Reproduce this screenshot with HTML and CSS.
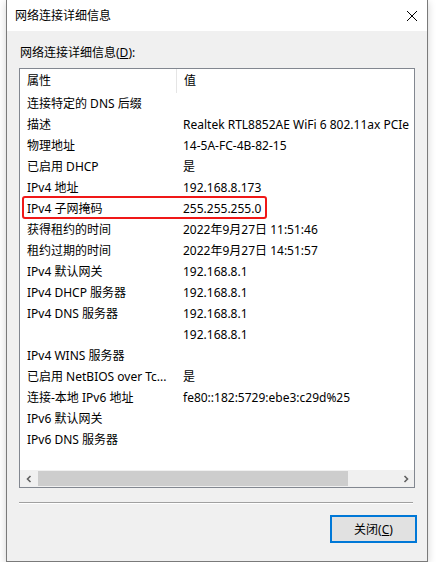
FILE: index.html
```html
<!DOCTYPE html>
<html lang="zh-CN">
<head>
    <meta charset="UTF-8">
    <title>网络连接详细信息</title>
    <link rel="stylesheet" href="styles.css">
</head>
<body>
    <div class="window">
        <div class="titlebar">
            <span class="title">网络连接详细信息</span>
            <svg class="close" width="12" height="12" viewBox="0 0 12 12">
                <path d="M1 1 L11 11 M11 1 L1 11" stroke="#000" stroke-width="1" fill="none"/>
            </svg>
        </div>
        <div class="content">
            <div class="label">网络连接详细信息(<u>D</u>):</div>
            <div class="listbox">
                <div class="header">
                    <div class="col1">属性</div>
                    <div class="col2">值</div>
                </div>
                <div class="rows">
                    <div class="row"><div class="col1">连接特定的 DNS 后缀</div><div class="col2"></div></div>
                    <div class="row"><div class="col1">描述</div><div class="col2">Realtek RTL8852AE WiFi 6 802.11ax PCIe</div></div>
                    <div class="row"><div class="col1">物理地址</div><div class="col2">14-5A-FC-4B-82-15</div></div>
                    <div class="row"><div class="col1">已启用 DHCP</div><div class="col2">是</div></div>
                    <div class="row"><div class="col1">IPv4 地址</div><div class="col2">192.168.8.173</div></div>
                    <div class="row"><div class="col1">IPv4 子网掩码</div><div class="col2">255.255.255.0</div></div>
                    <div class="row"><div class="col1">获得租约的时间</div><div class="col2">2022年9月27日 11:51:46</div></div>
                    <div class="row"><div class="col1">租约过期的时间</div><div class="col2">2022年9月27日 14:51:57</div></div>
                    <div class="row"><div class="col1">IPv4 默认网关</div><div class="col2">192.168.8.1</div></div>
                    <div class="row"><div class="col1">IPv4 DHCP 服务器</div><div class="col2">192.168.8.1</div></div>
                    <div class="row"><div class="col1">IPv4 DNS 服务器</div><div class="col2">192.168.8.1</div></div>
                    <div class="row"><div class="col1"></div><div class="col2">192.168.8.1</div></div>
                    <div class="row"><div class="col1">IPv4 WINS 服务器</div><div class="col2"></div></div>
                    <div class="row"><div class="col1">已启用 NetBIOS over Tc...</div><div class="col2">是</div></div>
                    <div class="row"><div class="col1">连接-本地 IPv6 地址</div><div class="col2">fe80::182:5729:ebe3:c29d%25</div></div>
                    <div class="row"><div class="col1">IPv6 默认网关</div><div class="col2"></div></div>
                    <div class="row"><div class="col1">IPv6 DNS 服务器</div><div class="col2"></div></div>
                </div>
                <div class="scrollbar">
                    <div class="sb-btn">
                        <svg width="8" height="8" viewBox="0 0 8 8"><path d="M5.5 1 L2.5 4 L5.5 7" stroke="#606060" stroke-width="1.6" fill="none"/></svg>
                    </div>
                    <div class="sb-track"><div class="sb-thumb"></div></div>
                    <div class="sb-btn">
                        <svg width="8" height="8" viewBox="0 0 8 8"><path d="M2.5 1 L5.5 4 L2.5 7" stroke="#606060" stroke-width="1.6" fill="none"/></svg>
                    </div>
                </div>
                <div class="highlight"></div>
            </div>
            <div class="separator"></div>
            <div class="buttons">
                <button class="btn">关闭(<u>C</u>)</button>
            </div>
        </div>
    </div>
</body>
</html>
```

FILE: styles.css
```css
body {
    margin: 0;
    padding: 0;
    background-color: #ffffff;
    font-family: "Noto Sans", "Noto Sans CJK SC", sans-serif;
    font-size: 12px;
    color: #000000;
}

.window {
    margin-left: 6px;
    width: 420px;
    height: 561px;
    border: 1px solid #7a7a7a;
    border-top: none;
    background-color: #f0f0f0;
    box-shadow: 0 2px 8px rgba(0, 0, 0, 0.18);
    display: flex;
    flex-direction: column;
}

.titlebar {
    height: 31px;
    background-color: #ffffff;
    display: flex;
    align-items: center;
    justify-content: space-between;
    padding: 0 9px 0 8px;
}

.title {
    line-height: 16px;
}

.close {
    display: block;
    margin-top: 1px;
}

.content {
    flex: 1;
    padding: 14px 12px 0 12px;
    display: flex;
    flex-direction: column;
}

.label {
    line-height: 16px;
    padding-left: 1px;
    margin-bottom: 7px;
}

.listbox {
    position: relative;
    height: 418px;
    border: 1px solid #828790;
    background-color: #ffffff;
    display: flex;
    flex-direction: column;
    overflow: hidden;
}

.header {
    display: flex;
    height: 24px;
    align-items: stretch;
}

.header .col1 {
    border-right: 1px solid #e5e5e5;
    line-height: 24px;
}

.header .col2 {
    line-height: 24px;
}

.rows {
    flex: 1;
}

.row {
    display: flex;
    height: 21px;
    line-height: 21px;
}

.col1 {
    width: 149px;
    flex: none;
    padding-left: 7px;
    white-space: nowrap;
    overflow: hidden;
}

.col2 {
    padding-left: 7px;
    white-space: nowrap;
}

.scrollbar {
    height: 17px;
    background-color: #f0f0f0;
    display: flex;
}

.sb-btn {
    width: 17px;
    display: flex;
    align-items: center;
    justify-content: center;
}

.sb-track {
    flex: 1;
    padding: 1px 49px 1px 1px;
    display: flex;
}

.sb-thumb {
    flex: 1;
    background-color: #cdcdcd;
}

.highlight {
    position: absolute;
    left: 2px;
    top: 127px;
    width: 241px;
    height: 19px;
    border: 2px solid #f01818;
    border-radius: 3px;
}

.separator {
    margin-top: 14px;
    margin-right: 2px;
    height: 1px;
    background-color: #a0a0a0;
    border-bottom: 1px solid #ffffff;
}

.buttons {
    display: flex;
    justify-content: flex-end;
    margin-top: 11px;
}

.btn {
    width: 87px;
    height: 28px;
    margin-right: -2px;
    background-color: #e1e1e1;
    border: 2px solid #0078d7;
    font-family: "Noto Sans", "Noto Sans CJK SC", sans-serif;
    font-size: 12px;
    color: #000000;
    padding: 0;
}
```
